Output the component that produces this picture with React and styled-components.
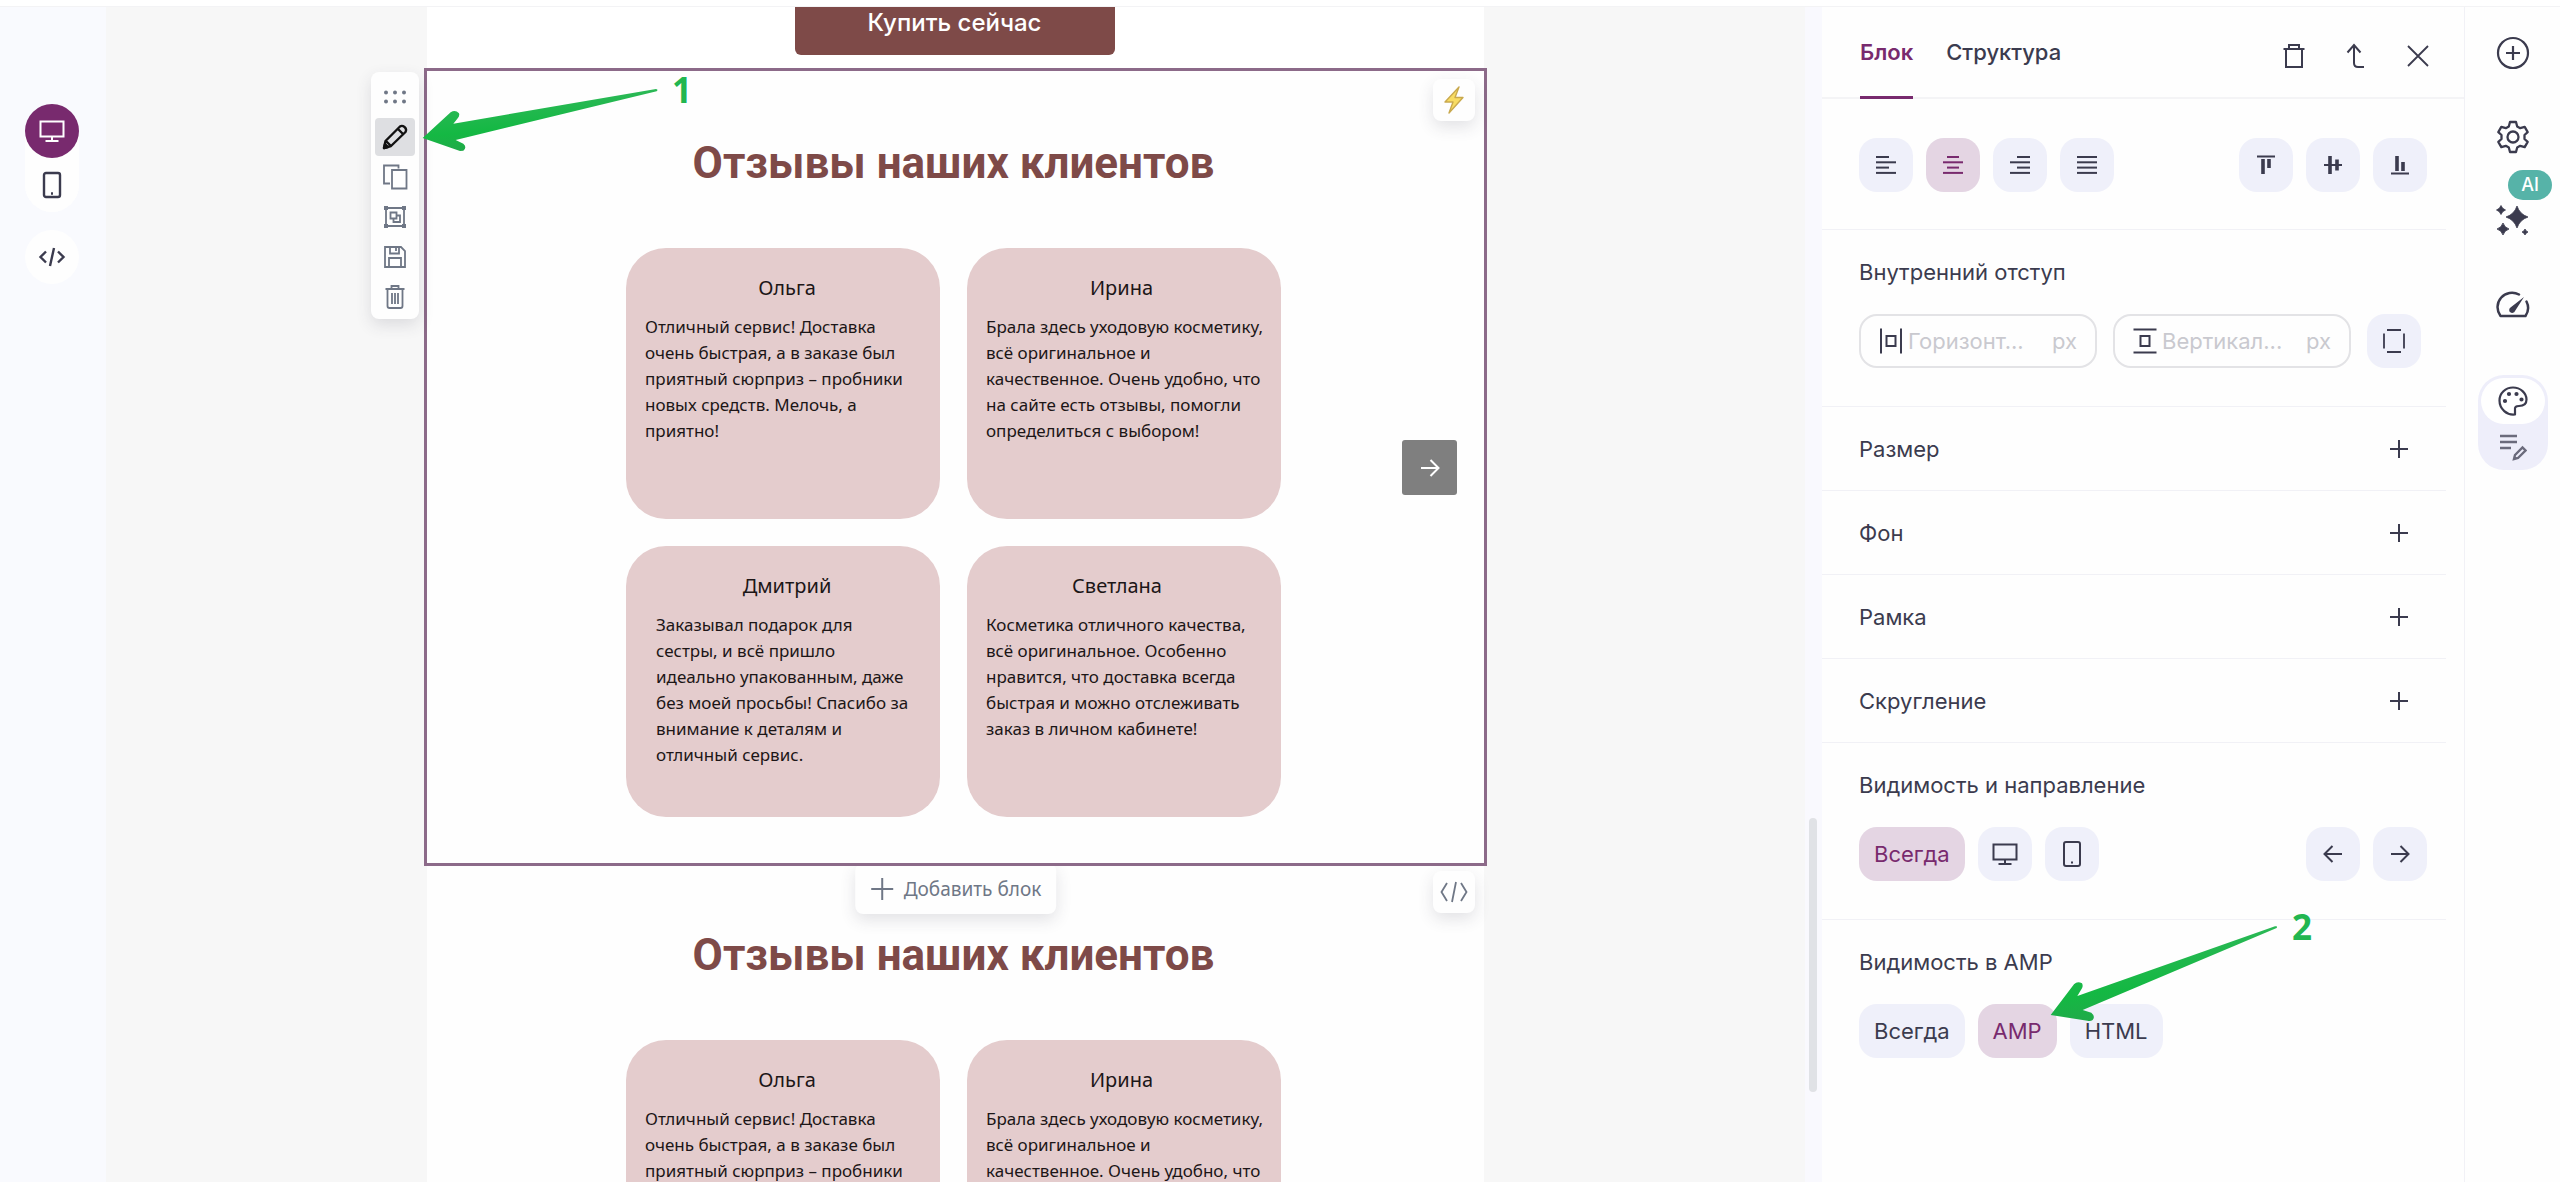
import React from 'react';
import styled, { createGlobalStyle, css } from 'styled-components';

const color = {
  ink: '#3b3b4e',
  muted: '#6f7786',
  accent: '#782a6e',
  accentSoft: '#e4d5e3',
  control: '#eff0fa',
  line: '#f1f1f6',
  brand: '#7e4a48',
  rose: '#e4cccd',
  green: '#22b650',
};

const ui = '"Inter", "Noto Sans", sans-serif';
const letter = '"Noto Sans", "Open Sans", sans-serif';

const GlobalStyle = createGlobalStyle`
  *, *::before, *::after { box-sizing: border-box; }
  body { margin: 0; background: #fefefe; color: ${color.ink}; font-family: ${ui}; }
  button, input { font: inherit; color: inherit; }
  button { margin: 0; padding: 0; border: 0; background: none; cursor: pointer; }
  h2, h3, p { margin: 0; }
  svg { display: block; flex: none; }
`;

/* ---------- shell ---------- */

const Shell = styled.div`
  display: flex;
  flex-direction: column;
  height: 100vh;
  overflow: hidden;
`;

const TopEdge = styled.header`
  flex: none;
  height: 7px;
  background: #fff;
  border-bottom: 1px solid #f3f3f5;
`;

const Workspace = styled.div`
  flex: 1;
  display: flex;
  min-height: 0;
`;

const DeviceBar = styled.nav`
  flex: none;
  width: 106px;
  padding: 97px 0 0 25px;
  display: flex;
  flex-direction: column;
  align-items: flex-start;
  gap: 18px;
  background: #f9fafe;
`;

const DeviceSwitch = styled.div`
  display: flex;
  flex-direction: column;
  border-radius: 27px;
  background: #fefefe;
`;

const RoundButton = styled.button`
  width: 54px;
  height: 54px;
  display: grid;
  place-items: center;
  border-radius: 50%;
  background: ${p => (p.$active ? color.accent : '#fefefe')};
  color: ${p => (p.$active ? '#fff' : color.ink)};
`;

const Canvas = styled.main`
  flex: 1;
  min-width: 0;
  display: flex;
  justify-content: center;
  align-items: flex-start;
  overflow: hidden;
  background: #f7f7f7;
`;

const ScrollTrack = styled.div`
  flex: none;
  position: relative;
  width: 17px;
  background: #f9f9fe;
`;

const ScrollThumb = styled.div`
  position: absolute;
  top: 69%;
  left: 4px;
  width: 8px;
  height: 274px;
  border-radius: 4px;
  background: #e0e2e6;
`;

/* ---------- letter ---------- */

const Letter = styled.div`
  width: 1057px;
  background: #fff;
  font-family: ${letter};
`;

const CtaRow = styled.section`
  display: flex;
  justify-content: center;
  height: 64px;
  padding-right: 2px;
`;

const BuyButton = styled.button`
  width: 320px;
  height: 64px;
  margin-top: -16px;
  border-radius: 6px;
  background: ${color.brand};
  color: #fff;
  font: 500 24px/64px ${ui};
`;

const Block = styled.section`
  position: relative;
  padding: 64px 4px 46px 0;
  background: #fefefe;
  ${p => p.$selected && css`
    z-index: 1;
    outline: 3px solid #8c6a89;
  `}
`;

const BlockTitle = styled.h2`
  margin-bottom: 57px;
  color: ${color.brand};
  font: 700 44px/56px Roboto, sans-serif;
  text-align: center;
`;

const CardGrid = styled.div`
  display: grid;
  grid-template-columns: 314px 314px;
  grid-auto-rows: 271px;
  justify-content: center;
  gap: 27px;
`;

const Card = styled.article`
  padding: 26px 0 0 19px;
  border-radius: 40px;
  background: ${color.rose};
  color: #1c1617;
`;

const CardName = styled.h3`
  margin-bottom: 12px;
  padding-right: ${p => p.$inset}px;
  font-weight: 400;
  font-size: 20px;
  line-height: 28px;
  text-align: center;
`;

const CardText = styled.p`
  padding-left: ${p => (p.$indented ? 11 : 0)}px;
  font-size: 17px;
  line-height: 26px;
  white-space: pre;
`;

const floating = css`
  position: absolute;
  background: #fefefe;
  border-radius: 8px;
  box-shadow: 0 6px 16px rgba(60, 60, 80, 0.14);
`;

const CornerButton = styled.button`
  ${floating}
  top: 8px;
  right: 9px;
  width: 42px;
  height: 42px;
  display: grid;
  place-items: center;
  color: ${color.muted};
`;

const NextButton = styled.button`
  position: absolute;
  top: calc(50% - 27px);
  right: 27px;
  width: 55px;
  height: 55px;
  display: grid;
  place-items: center;
  border-radius: 3px;
  background: #7f7f7f;
  color: #fff;
`;

const AddBlock = styled.button`
  ${floating}
  top: 0;
  left: 50%;
  transform: translateX(-50%);
  height: 51px;
  padding: 0 15px;
  display: flex;
  align-items: center;
  gap: 10px;
  color: ${color.muted};
  font-size: 19px;
  line-height: 26px;
  white-space: nowrap;
`;

const BlockTools = styled.div`
  ${floating}
  top: 1px;
  left: -56px;
  width: 48px;
  padding: 6px 4px 3px;
  display: flex;
  flex-direction: column;
  gap: 2px;
  color: ${color.muted};
`;

const ToolButton = styled.button`
  height: 38px;
  display: grid;
  place-items: center;
  border-radius: 4px;
  background: ${p => (p.$active ? '#dedfe2' : 'transparent')};
  color: ${p => (p.$active ? '#111' : 'inherit')};
`;

/* ---------- callouts ---------- */

const Callout = styled.div`
  position: absolute;
  z-index: 2;
  top: -21px;
  left: ${p => p.$left}px;
  display: flex;
  align-items: flex-start;
  gap: 12px;
  pointer-events: none;
`;

const CalloutNumber = styled.span`
  padding-top: ${p => p.$drop}px;
  color: ${color.green};
  font: 700 35px/48px ${letter};
`;

/* ---------- settings panel ---------- */

const Panel = styled.aside`
  flex: none;
  width: 643px;
  background: #fefefe;
  border-right: 1px solid ${color.line};
  font-size: 22px;
  line-height: 28px;
`;

const PanelHeader = styled.div`
  display: flex;
  align-items: stretch;
  height: 92px;
  padding: 0 32px 0 38px;
  border-bottom: 2px solid #f4f4f6;
`;

const Tab = styled.button`
  margin: 0 33px -2px 0;
  border-bottom: 3px solid ${p => (p.$active ? color.accent : 'transparent')};
  color: ${p => (p.$active ? color.accent : color.ink)};
  font-weight: ${p => (p.$active ? 600 : 500)};
`;

const HeaderActions = styled.div`
  display: flex;
  align-items: center;
  gap: 34px;
  margin-left: auto;
  padding-top: 8px;
`;

const IconButton = styled.button`
  display: grid;
  place-items: center;
  width: 28px;
  height: 28px;
`;

const Section = styled.section`
  position: relative;
  margin-right: 18px;
  padding: ${p => (p.$untitled ? 39 : 28)}px 19px ${p => (p.$untitled ? 37 : 38)}px 37px;
  border-bottom: 1px solid ${p => (p.$last ? 'transparent' : color.line)};
`;

const SectionTitle = styled.h3`
  margin-bottom: 28px;
  font: inherit;
`;

const Controls = styled.div`
  display: flex;
  gap: ${p => p.$gap || 13}px;
`;

const Spread = styled.div`
  display: flex;
  justify-content: space-between;
`;

const Choice = styled.button`
  min-width: 54px;
  height: 54px;
  padding: 0 ${p => (p.$text ? 15 : 0)}px;
  display: grid;
  place-items: center;
  border-radius: 18px;
  background: ${p => (p.$active ? color.accentSoft : color.control)};
  color: ${p => (p.$active ? color.accent : color.ink)};
`;

const Field = styled.label`
  flex: none;
  display: flex;
  align-items: center;
  gap: 5px;
  width: 238px;
  height: 54px;
  padding: 0 18px;
  border: 2px solid #e3e3e6;
  border-radius: 18px;
`;

const FieldInput = styled.input`
  flex: 1;
  min-width: 0;
  padding: 0;
  border: 0;
  outline: 0;
  background: transparent;
  &::placeholder { color: #c9c9cf; opacity: 1; }
`;

const Unit = styled.span`
  color: #c9c9cf;
`;

const FoldRow = styled.button`
  display: flex;
  align-items: center;
  justify-content: space-between;
  width: calc(100% - 18px);
  height: 84px;
  padding: 0 37px;
  border-bottom: 1px solid ${color.line};
  text-align: left;
`;

/* ---------- right rail ---------- */

const Rail = styled.nav`
  flex: none;
  width: 95px;
  padding-top: 4px;
  display: flex;
  flex-direction: column;
  align-items: center;
  background: #fefefe;
`;

const RailButton = styled.button`
  position: relative;
  width: 100%;
  height: 84px;
  display: grid;
  place-items: center;
`;

const AiBadge = styled.span`
  position: absolute;
  top: -9px;
  right: 8px;
  padding: 0 13px;
  border-radius: 15px;
  background: #56b3a8;
  color: #fff;
  font-weight: 500;
  font-size: 18px;
  line-height: 30px;
`;

const ModeSwitch = styled.div`
  width: 70px;
  margin-top: 28px;
  padding: 3px 3px 0;
  border-radius: 26px;
  background: #eeeefa;
`;

const ModeButton = styled.button`
  width: 100%;
  height: 46px;
  display: grid;
  place-items: center;
  border-radius: 24px;
  background: ${p => (p.$active ? '#fff' : 'transparent')};
  color: ${p => (p.$active ? color.ink : '#6b6b7c')};
`;

/* ---------- icons ---------- */

const Svg = ({ w, h = w, sw = 2, children, ...rest }) => (
  <svg width={w} height={h} viewBox={`0 0 ${w} ${h}`} fill="none" stroke="currentColor" strokeWidth={sw} aria-hidden="true" {...rest}>
    {children}
  </svg>
);

const Monitor = ({ sw = 2 }) => (
  <Svg w={28} h={24} sw={sw}>
    <path d="M2.500 2.500h23v15h-23zM14 17.500v4M7.500 22h13" />
  </Svg>
);
const Phone = ({ sw = 2 }) => (
  <Svg w={20} h={28} sw={sw}>
    <rect x="2" y="2" width="16" height="24" rx="2" />
    <path d="M9 22.500h2" />
  </Svg>
);
const Code = ({ sw = 2 }) => (
  <Svg w={28} h={22} sw={sw}>
    <path d="M8 5.500 2.500 11 8 16.500M20 5.500l5.500 5.500-5.500 5.500M16 2l-4 18" />
  </Svg>
);
const CodeThin = () => (
  <Svg w={30} h={24} sw={1.8}>
    <path d="M8 3 2.500 12 8 21M22 3l5.500 9L22 21M17 2l-4 20" />
  </Svg>
);
const Dots = () => (
  <Svg w={24} h={16} fill="currentColor" stroke="none">
    {[3, 12, 21].map(x => [3.5, 12.5].map(y => <circle key={`${x}-${y}`} cx={x} cy={y} r="2" />))}
  </Svg>
);
const Pencil = () => (
  <Svg w={26} sw={2.4} strokeLinejoin="round">
    <path d="M2 24l1.500-7L18 2.500q2-1.500 4.500 .5t1 5L9 22zM16 5l5 5M4 17l5 5" />
    <path d="M2 24l1-4 3 3z" fill="currentColor" />
  </Svg>
);
const Copy = () => (
  <Svg w={26} sw={1.8}>
    <path d="M8 19.500H2v-18h14.500v3M10 6h14.500v18.500H10z" />
  </Svg>
);
const Group = () => (
  <Svg w={24} sw={1.8}>
    <path d="M3 3h18v18H3zM7.500 7.500h6v6h-6zM13.500 10.500H17v6.500h-6.500v-3.500" />
    <path d="M1 1h4v4H1zM19 1h4v4h-4zM1 19h4v4H1zM19 19h4v4h-4z" fill="currentColor" stroke="none" />
  </Svg>
);
const Save = () => (
  <Svg w={24} sw={1.8}>
    <path d="M2 2h16l4 4v16H2zM7 2v6.500h9V2M13 3v3M6 22v-9h12v9" />
  </Svg>
);
const Bin = () => (
  <Svg w={24} h={26} sw={1.8}>
    <path d="M2.500 5h19M8.500 5V2h7v3M4.500 5v17q0 2 2 2h11q2 0 2-2V5M9 9v11M12 9v11M15 9v11" />
  </Svg>
);
const Bolt = () => (
  <Svg w={26} h={30} sw={1.4} stroke="#c9a94e" fill="#f8dc62" strokeLinejoin="round">
    <path d="M18 2 4 17h8L8 28 22 12.500h-8z" />
  </Svg>
);
const TrashLine = () => (
  <Svg w={24} h={26} sw={2}>
    <path d="M1.500 6h21M7 6V2h10v4M4 6v18h16V6" />
  </Svg>
);
const UpArrow = () => (
  <Svg w={22} h={26} sw={2}>
    <path d="M2.500 9.500 9 2l6.500 7.500M9 2v18q0 4 4 4h6" />
  </Svg>
);
const Cross = () => (
  <Svg w={24} sw={1.8}>
    <path d="M2 2l20 20M22 2 2 22" />
  </Svg>
);
const Plus = ({ size = 20, sw = 2 }) => (
  <Svg w={size} sw={sw}>
    <path d={`M${size / 2} 1v${size - 2}M1 ${size / 2}h${size - 2}`} />
  </Svg>
);
const ArrowRight = () => (
  <Svg w={22} h={20} sw={2}>
    <path d="M2 10h17M11.500 2l8 8-8 8" />
  </Svg>
);
const ArrowLeft = () => (
  <Svg w={22} h={20} sw={2}>
    <path d="M20 10H3M10.500 2l-8 8 8 8" />
  </Svg>
);
const lineSets = {
  left: [[1, 14], [1, 21], [1, 14], [1, 21]],
  center: [[5, 17], [1, 21], [5, 17], [1, 21]],
  right: [[8, 21], [1, 21], [8, 21], [1, 21]],
  justify: [[1, 21], [1, 21], [1, 21], [1, 21]],
};
const Lines = ({ kind }) => (
  <Svg w={22} h={20} sw={2}>
    {lineSets[kind].map(([a, b], i) => <path key={i} d={`M${a} ${2 + i * 5.300}H${b}`} />)}
  </Svg>
);
const VTop = () => (
  <Svg w={20} h={20} sw={2}>
    <path d="M1 1.500h18" />
    <path d="M7 4v15M13 4v9" strokeWidth="3.600" />
  </Svg>
);
const VMiddle = () => (
  <Svg w={20} h={20} sw={2}>
    <path d="M1 10h18" />
    <path d="M7 1v18M14 4.500v11" strokeWidth="3.600" />
  </Svg>
);
const VBottom = () => (
  <Svg w={20} h={20} sw={2}>
    <path d="M1 18.500h18" />
    <path d="M7 1v15M13 7v9" strokeWidth="3.600" />
  </Svg>
);
const PadX = () => (
  <Svg w={24} h={26} sw={2}>
    <path d="M2 .5v25M22 .5v25M7.500 8h9v10h-9z" />
  </Svg>
);
const PadY = () => (
  <Svg w={24} h={26} sw={2}>
    <path d="M.5 1.500h23M.5 24.500h23M7.500 8h9v10h-9z" />
  </Svg>
);
const PadAll = () => (
  <Svg w={24} h={26} sw={1.8}>
    <path d="M5 2h14M5 24h14M2 5.500v15M22 5.500v15" />
  </Svg>
);
const CirclePlus = () => (
  <Svg w={34} sw={2.2}>
    <circle cx="17" cy="17" r="15" />
    <path d="M17 10v14M10 17h14" />
  </Svg>
);
const Gear = () => (
  <Svg w={34} sw={2.3} strokeLinejoin="round">
    <circle cx="17" cy="17" r="5.500" />
    <path d="M14 2h6l1.200 4.500 3 1.700 4.500-1.300 3 5.200L28.500 15v4l3.200 2.900-3 5.200-4.500-1.300-3 1.700L20 32h-6l-1.200-4.500-3-1.700-4.500 1.300-3-5.200L5.500 19v-4L2.300 12.100l3-5.200 4.500 1.300 3-1.700z" />
  </Svg>
);
const star = (x, y, r) =>
  `M${x} ${y - r}Q${x + r * 0.25} ${y - r * 0.25} ${x + r} ${y}Q${x + r * 0.25} ${y + r * 0.25} ${x} ${y + r}Q${x - r * 0.25} ${y + r * 0.25} ${x - r} ${y}Q${x - r * 0.25} ${y - r * 0.25} ${x} ${y - r}Z`;
const Sparkles = () => (
  <Svg w={34} fill="currentColor" strokeLinejoin="round" sw={0.8}>
    <path d={star(21, 13, 11) + star(5, 6, 4.5) + star(7, 25, 6) + star(29, 28, 3)} />
  </Svg>
);
const Gauge = () => (
  <Svg w={34} h={30} sw={2.5} strokeLinecap="round" strokeLinejoin="round">
    <path d="M23 4.500A14.500 14.500 0 0 0 4.500 26h25a14.500 14.500 0 0 0 1-14.500" />
    <path d="M28 7 14.500 17.500a3 3 0 1 0 4.500 3.500z" fill="currentColor" stroke="none" />
  </Svg>
);
const Palette = () => (
  <Svg w={32} sw={2.2} strokeLinejoin="round">
    <path d="M18 29.500C10 30.500 2.500 24 2.500 15.500 2.500 8 8.500 2.500 16 2.500S29.500 8 29.500 14.500c0 4.500-3 6.500-7.500 6.500-3 0-4.500 1-4 4z" />
    {[[8, 16], [12, 9], [19.5, 9], [24.5, 14.5]].map(([x, y]) => <circle key={x} cx={x} cy={y} r="1" />)}
  </Svg>
);
const ListEdit = () => (
  <Svg w={28} sw={2.4}>
    <path d="M1 3h17M1 9h17M1 15h11" />
    <path d="M15 26l1-4 7.500-7.500 3 3-7.500 7.500z" />
  </Svg>
);

const Arrow = ({ id, d }) => (
  <svg width="250" height="130" viewBox="0 0 750 390" aria-hidden="true">
    <defs>
      <linearGradient id={id} x1="0" y1="0" x2="0.3" y2="1">
        <stop offset="0" stopColor="#3ab862" />
        <stop offset="0.7" stopColor="#14b843" />
        <stop offset="1" stopColor="#22a84a" />
      </linearGradient>
    </defs>
    <path fill={`url(#${id})`} d={d} />
  </svg>
);

/* ---------- content ---------- */

const reviews = [
  {
    name: 'Ольга',
    inset: 11,
    text: 'Отличный сервис! Доставка\nочень быстрая, а в заказе был\nприятный сюрприз – пробники\nновых средств. Мелочь, а\nприятно!',
  },
  {
    name: 'Ирина',
    inset: 24,
    text: 'Брала здесь уходовую косметику,\nвсё оригинальное и\nкачественное. Очень удобно, что\nна сайте есть отзывы, помогли\nопределиться с выбором!',
  },
  {
    name: 'Дмитрий',
    inset: 11,
    indented: true,
    text: 'Заказывал подарок для\nсестры, и всё пришло\nидеально упакованным, даже\nбез моей просьбы! Спасибо за\nвнимание к деталям и\nотличный сервис.',
  },
  {
    name: 'Светлана',
    inset: 33,
    text: 'Косметика отличного качества,\nвсё оригинальное. Особенно\nнравится, что доставка всегда\nбыстрая и можно отслеживать\nзаказ в личном кабинете!',
  },
];

const tools = [
  ['Переместить', Dots],
  ['Редактировать', Pencil],
  ['Копировать', Copy],
  ['Сгруппировать', Group],
  ['Сохранить', Save],
  ['Удалить', Bin],
];

const folds = ['Размер', 'Фон', 'Рамка', 'Скругление'];

function ReviewBlock({ selected, children }) {
  return (
    <Block $selected={selected}>
      <BlockTitle>Отзывы наших клиентов</BlockTitle>
      <CardGrid>
        {reviews.map(r => (
          <Card key={r.name}>
            <CardName $inset={r.inset}>{r.name}</CardName>
            <CardText $indented={r.indented}>{r.text}</CardText>
          </Card>
        ))}
      </CardGrid>
      {children}
    </Block>
  );
}

export default function App() {
  return (
    <Shell>
      <GlobalStyle />
      <TopEdge />
      <Workspace>
        <DeviceBar>
          <DeviceSwitch>
            <RoundButton $active aria-label="Компьютер"><Monitor /></RoundButton>
            <RoundButton aria-label="Телефон"><Phone sw={2.4} /></RoundButton>
          </DeviceSwitch>
          <RoundButton aria-label="Код"><Code sw={2.4} /></RoundButton>
        </DeviceBar>

        <Canvas>
          <Letter>
            <CtaRow><BuyButton>Купить сейчас</BuyButton></CtaRow>
            <ReviewBlock selected>
              <CornerButton aria-label="AMP-блок"><Bolt /></CornerButton>
              <NextButton aria-label="Вперёд"><ArrowRight /></NextButton>
              <BlockTools>
                {tools.map(([label, Icon], i) => (
                  <ToolButton key={label} aria-label={label} $active={i === 1}><Icon /></ToolButton>
                ))}
              </BlockTools>
              <Callout $left={-17}>
                <Arrow id="arrow-edit" d="M38 264L122 187Q136 178 147 190Q150 198 142 206L130 221L738 117Q746 119 740 124L137 270L160 281Q172 292 160 302L150 303Z" />
                <CalloutNumber $drop={16}>1</CalloutNumber>
              </Callout>
            </ReviewBlock>
            <ReviewBlock>
              <AddBlock><Plus size={24} sw={2} />Добавить блок</AddBlock>
              <CornerButton aria-label="HTML-блок"><CodeThin /></CornerButton>
            </ReviewBlock>
          </Letter>
        </Canvas>

        <ScrollTrack><ScrollThumb /></ScrollTrack>

        <Panel>
          <PanelHeader>
            <Tab $active>Блок</Tab>
            <Tab>Структура</Tab>
            <HeaderActions>
              <IconButton aria-label="Удалить"><TrashLine /></IconButton>
              <IconButton aria-label="Наверх"><UpArrow /></IconButton>
              <IconButton aria-label="Закрыть"><Cross /></IconButton>
            </HeaderActions>
          </PanelHeader>

          <Section $untitled>
            <Spread>
              <Controls>
                <Choice aria-label="По левому краю"><Lines kind="left" /></Choice>
                <Choice $active aria-label="По центру"><Lines kind="center" /></Choice>
                <Choice aria-label="По правому краю"><Lines kind="right" /></Choice>
                <Choice aria-label="По ширине"><Lines kind="justify" /></Choice>
              </Controls>
              <Controls>
                <Choice aria-label="По верху"><VTop /></Choice>
                <Choice aria-label="По середине"><VMiddle /></Choice>
                <Choice aria-label="По низу"><VBottom /></Choice>
              </Controls>
            </Spread>
          </Section>

          <Section>
            <SectionTitle>Внутренний отступ</SectionTitle>
            <Controls $gap={16}>
              <Field>
                <PadX />
                <FieldInput aria-label="Горизонтальный отступ" placeholder="Горизонт..." />
                <Unit>px</Unit>
              </Field>
              <Field>
                <PadY />
                <FieldInput aria-label="Вертикальный отступ" placeholder="Вертикал..." />
                <Unit>px</Unit>
              </Field>
              <Choice aria-label="Все стороны"><PadAll /></Choice>
            </Controls>
          </Section>

          {folds.map(name => (
            <FoldRow key={name}>{name}<Plus /></FoldRow>
          ))}

          <Section>
            <SectionTitle>Видимость и направление</SectionTitle>
            <Spread>
              <Controls>
                <Choice $text $active>Всегда</Choice>
                <Choice aria-label="Компьютер"><Monitor /></Choice>
                <Choice aria-label="Телефон"><Phone /></Choice>
              </Controls>
              <Controls>
                <Choice aria-label="Справа налево"><ArrowLeft /></Choice>
                <Choice aria-label="Слева направо"><ArrowRight /></Choice>
              </Controls>
            </Spread>
          </Section>

          <Section $last>
            <SectionTitle>Видимость в AMP</SectionTitle>
            <Controls>
              <Choice $text>Всегда</Choice>
              <Choice $text $active>AMP</Choice>
              <Choice $text>HTML</Choice>
            </Controls>
            <Callout $left={208}>
              <Arrow id="arrow-amp" d="M62 348L132 256Q142 245 156 253Q160 260 156 268L142 291L735 82Q744 80 740 87L158 333L184 341Q197 352 188 363Q182 367 172 365Z" />
              <CalloutNumber $drop={4}>2</CalloutNumber>
            </Callout>
          </Section>
        </Panel>

        <Rail>
          <RailButton aria-label="Добавить"><CirclePlus /></RailButton>
          <RailButton aria-label="Настройки"><Gear /></RailButton>
          <RailButton aria-label="Помощник"><Sparkles /><AiBadge>AI</AiBadge></RailButton>
          <RailButton aria-label="Производительность"><Gauge /></RailButton>
          <ModeSwitch>
            <ModeButton $active aria-label="Оформление"><Palette /></ModeButton>
            <ModeButton aria-label="Содержимое"><ListEdit /></ModeButton>
          </ModeSwitch>
        </Rail>
      </Workspace>
    </Shell>
  );
}
